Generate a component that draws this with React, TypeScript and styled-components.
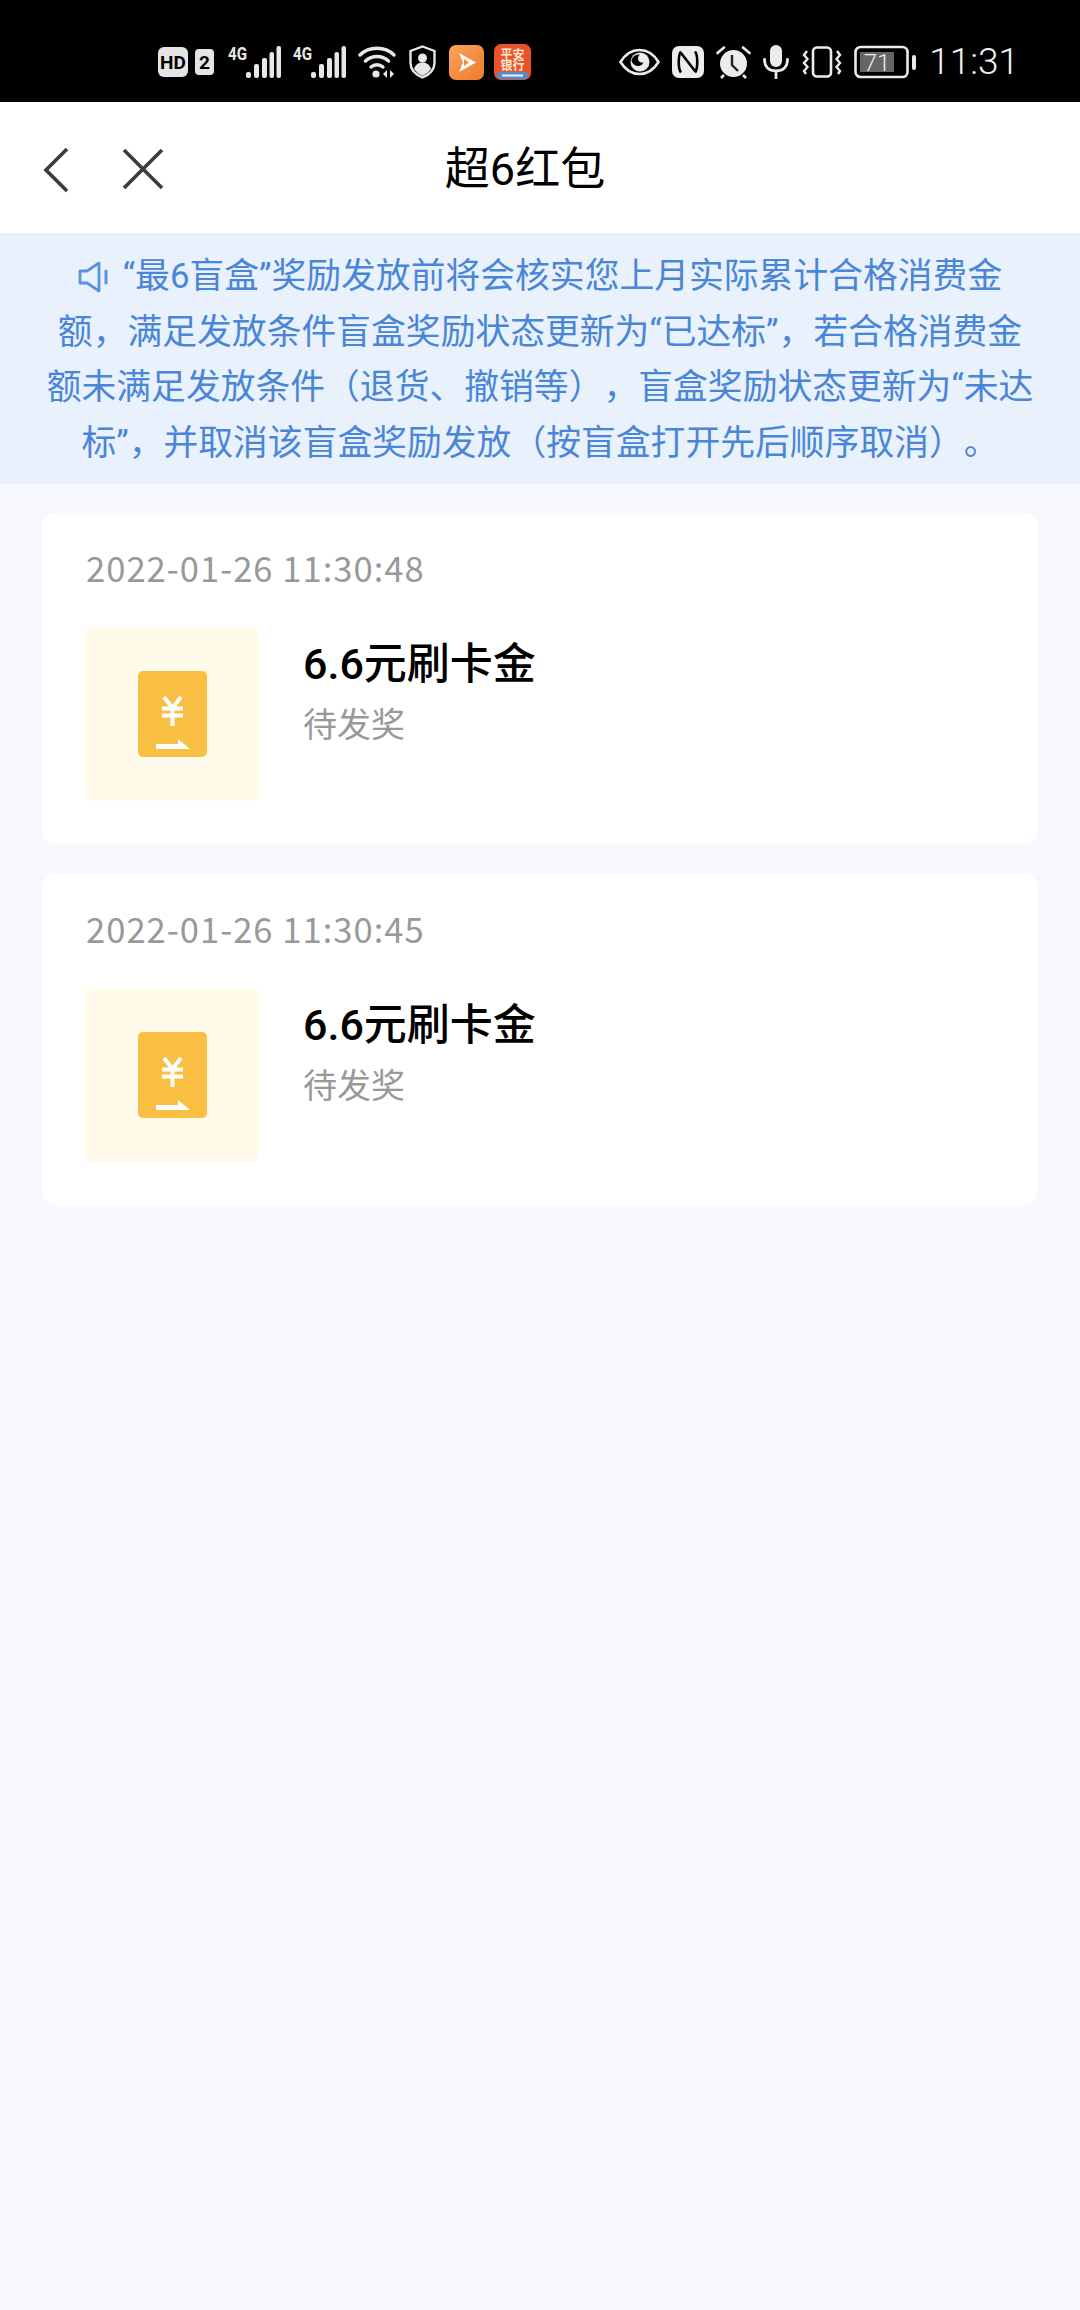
import React from 'react'
import styled, { createGlobalStyle } from 'styled-components'

const GlobalStyle = createGlobalStyle`
  html, body {
    margin: 0;
    padding: 0;
    background: #f7f9ff;
    font-family: Roboto, "Noto Sans CJK SC", sans-serif;
    text-spacing-trim: space-all;
  }
`

const Screen = styled.div`
  width: 1080px;
  min-height: 2310px;
  background: #f7f9ff;
`

const StatusBar = styled.div`
  display: flex;
  align-items: center;
  justify-content: space-between;
  height: 102px;
  padding: 22px 61px 0 158px;
  box-sizing: border-box;
  background: #000;
`

const StatusGroup = styled.div`
  display: flex;
  align-items: center;
`

const Glyph = styled.svg<{ $left?: number; $right?: number }>`
  display: block;
  flex: none;
  margin-left: ${({ $left }) => $left ?? 0}px;
  margin-right: ${({ $right }) => $right ?? 0}px;
`

const Clock = styled.span`
  margin-left: 12px;
  color: #f0f0f0;
  font-family: Roboto, sans-serif;
  font-size: 37px;
  font-weight: 300;
  line-height: 44px;
`

const NavBar = styled.div`
  position: relative;
  display: flex;
  align-items: center;
  justify-content: center;
  height: 132px;
  background: #fff;
  border-bottom: 1px solid #dfe5ee;
`

const NavButtons = styled.div`
  position: absolute;
  left: 41px;
  top: 45px;
  display: flex;
  gap: 40px;
`

const NavTitle = styled.h1`
  margin: 3px 30px 0 0;
  color: #000;
  font-size: 45px;
  font-weight: 400;
  line-height: 60px;
`

const Notice = styled.div`
  display: flex;
  flex-direction: column;
  align-items: center;
  height: 249px;
  padding-top: 14px;
  box-sizing: border-box;
  background: #e8f1fc;
  color: #4a86d8;
  font-size: 34.8px;
  line-height: 55.5px;
`

const NoticeLine = styled.div`
  display: flex;
  align-items: center;
  white-space: nowrap;
`

const CardList = styled.div`
  display: flex;
  flex-direction: column;
  gap: 30px;
  padding: 29px 43px 0;
`

const Card = styled.div`
  display: flex;
  flex-direction: column;
  height: 331px;
  padding: 32px 42px 0;
  box-sizing: border-box;
  background: #fff;
  border-radius: 12px;
`

const CardTime = styled.div`
  margin-left: 1px;
  color: #999;
  font-family: "Noto Sans CJK SC", sans-serif;
  font-size: 34.6px;
  letter-spacing: 1px;
  line-height: 44px;
`

const CardBody = styled.div`
  display: flex;
  gap: 44px;
  margin-top: 38px;
`

const Thumb = styled.div`
  display: flex;
  align-items: center;
  justify-content: center;
  width: 174px;
  height: 174px;
  background: #fffaea;
  border-radius: 6px;
`

const PrizeInfo = styled.div`
  display: flex;
  flex-direction: column;
  padding-top: 9px;
`

const PrizeName = styled.div`
  color: #000;
  font-size: 43px;
  font-weight: 500;
  line-height: 56px;
`

const PrizeState = styled.div`
  margin-top: 10px;
  color: #999;
  font-size: 34px;
  line-height: 46px;
`

const SignalIcon = ({ left }: { left: number }) => (
  <Glyph $left={left} width="54" height="40" viewBox="0 -3 54 40">
    <text x="0" y="15" fill="#e8e8e8" fontFamily="Roboto, sans-serif" fontWeight="700" fontSize="18" textLength="19" lengthAdjust="spacingAndGlyphs">4G</text>
    <rect x="18" y="27" width="5" height="6" rx="2" fill="#e8e8e8" />
    <rect x="26" y="19" width="5" height="14" rx="2" fill="#e8e8e8" />
    <rect x="34" y="13" width="5" height="20" rx="2" fill="#e8e8e8" />
    <rect x="41.500" y="7" width="4.500" height="26" rx="2" fill="#e8e8e8" />
    <rect x="48.500" y="1" width="4.500" height="32" rx="2" fill="#e8e8e8" />
  </Glyph>
)

const StatusIconsLeft = () => (
  <StatusGroup>
    <Glyph width="30" height="30" viewBox="0 0 30 30">
      <rect width="30" height="30" rx="6" fill="#e4e4e4" />
      <text x="15" y="22" textAnchor="middle" fill="#000" fontFamily="Roboto, sans-serif" fontWeight="700" fontSize="19">HD</text>
    </Glyph>
    <Glyph $left={7} width="19" height="26" viewBox="0 0 19 26">
      <rect width="19" height="26" rx="4" fill="#e4e4e4" />
      <text x="9.500" y="20" textAnchor="middle" fill="#000" fontFamily="Roboto, sans-serif" fontWeight="700" fontSize="19">2</text>
    </Glyph>
    <SignalIcon left={14} />
    <SignalIcon left={11} />
    <Glyph $left={11} width="38" height="34" viewBox="0 0 38 34">
      <g fill="none" stroke="#e8e8e8" strokeWidth="3.400" strokeLinecap="round">
        <path d="M2 10C11 1 27 1 36 10" />
        <path d="M7.500 16C14 10 24 10 30.500 16" />
        <path d="M13 22C16.500 19 21.500 19 25 22" />
      </g>
      <circle cx="18" cy="29" r="3.600" fill="#e8e8e8" />
      <path d="M29 25v8l-4-4zM32 25v8l4-4z" fill="#e8e8e8" />
    </Glyph>
    <Glyph $left={13} width="27" height="34" viewBox="0 0 27 34">
      <path d="M13.500 1.500 25.500 6v12c0 7-5 11.500-12 14.500C6.500 29.500 1.500 25 1.500 18V6z" fill="none" stroke="#e8e8e8" strokeWidth="2.400" />
      <circle cx="13.500" cy="13" r="4.500" fill="#e8e8e8" />
      <path d="M5 24c1.500-5 5-6.500 8.500-6.500S20.500 19 22 24c-2 3-5 5-8.500 7C10 29 7 27 5 24z" fill="#e8e8e8" />
    </Glyph>
    <Glyph $left={13} width="35" height="35" viewBox="0 0 35 35">
      <defs>
        <linearGradient id="videoApp" x1="0" y1="0" x2="1" y2="1">
          <stop offset="0" stopColor="#f9a45a" />
          <stop offset="1" stopColor="#ef7a2c" />
        </linearGradient>
      </defs>
      <rect width="35" height="35" rx="7" fill="url(#videoApp)" />
      <path d="M10 8 27 17.500 10 27l4-9.500z" fill="#fff" />
      <path d="M15 14l5 3.500-5 3.500z" fill="#f08a3c" />
    </Glyph>
    <Glyph $left={10} width="37" height="36" viewBox="0 0 37 36">
      <rect width="37" height="36" rx="7" fill="#e8532b" />
      <text textAnchor="middle" fill="#ffe9d6" fontFamily='"Noto Sans CJK SC", sans-serif' fontSize="12" fontWeight="700">
        <tspan x="18.500" y="15">平安</tspan>
        <tspan x="18.500" y="26">银行</tspan>
      </text>
      <rect x="3" y="28" width="31" height="7" rx="3.500" fill="#4d8fd0" />
      <rect x="8" y="30.500" width="21" height="2" fill="#e8f1fd" />
    </Glyph>
  </StatusGroup>
)

const StatusIconsRight = () => (
  <StatusGroup>
    <Glyph width="41" height="28" viewBox="0 0 41 28">
      <path d="M1.500 14C7 5 13 2 20.500 2S34 5 39.500 14C34 23 28 26 20.500 26S7 23 1.500 14z" fill="none" stroke="#ececec" strokeWidth="2.600" />
      <circle cx="21" cy="14" r="9.500" fill="#ececec" />
      <path d="M12.500 12C14 7.500 18 6 21 6.500c-2 1.500-2.500 4-1.500 6 1 1.800 3 2.500 5 2-1 2.500-3.500 4-6 3.500-3-.6-6-3-6-6z" fill="#000" />
    </Glyph>
    <Glyph $left={12} width="32" height="32" viewBox="0 0 32 32">
      <rect width="32" height="32" rx="7" fill="#ececec" />
      <path d="M9 5.500C6 9 6 23 9 26.500M9 7l14 18M23 5.500C26 9 26 23 23 26.500" fill="none" stroke="#000" strokeWidth="2.600" />
    </Glyph>
    <Glyph $left={12} width="35" height="34" viewBox="0 0 35 34">
      <circle cx="17.500" cy="18.500" r="13.500" fill="#ececec" />
      <path d="M16 10v10l6 6" fill="none" stroke="#222" strokeWidth="2.400" />
      <path d="M1.500 8 8 2.500M33.500 8 27 2.500" stroke="#ececec" strokeWidth="2.600" strokeLinecap="round" />
      <path d="M8 30l-3 3M27 30l3 3" stroke="#ececec" strokeWidth="2.600" />
    </Glyph>
    <Glyph $left={12} width="26" height="34" viewBox="0 0 26 34">
      <rect x="7" y="0" width="12" height="22" rx="6" fill="#ececec" />
      <path d="M1.500 14.500C1.500 22 6 26 13 26s11.500-4 11.500-11.500M13 26v8" fill="none" stroke="#ececec" strokeWidth="2.800" strokeLinecap="round" />
    </Glyph>
    <Glyph $left={13} width="40" height="32" viewBox="0 0 40 32">
      <rect x="11" y="1.500" width="18" height="29" rx="4" fill="none" stroke="#ececec" strokeWidth="2.600" />
      <path d="M5 5 2 9l3.500 4L2 17l3.500 4L2 25l2 3M35 5l3 4-3.500 4 3.500 4-3.500 4 3.500 4-2 3" fill="none" stroke="#ececec" strokeWidth="2.400" />
    </Glyph>
    <Glyph $left={12} width="63" height="34" viewBox="0 0 63 34">
      <rect x="1.500" y="2" width="52" height="30" rx="5" fill="none" stroke="#ececec" strokeWidth="2.600" />
      <rect x="6" y="7" width="34" height="20" fill="#666" />
      <text x="23" y="26" textAnchor="middle" fill="#ececec" fontFamily="Roboto, sans-serif" fontSize="24" fontWeight="300">71</text>
      <rect x="58" y="10" width="4" height="15" rx="2" fill="#ececec" />
    </Glyph>
    <Clock>11:31</Clock>
  </StatusGroup>
)

const BackIcon = () => (
  <Glyph width="30" height="46" viewBox="0 0 30 46">
    <path d="M26 2 5 23l21 21" fill="none" stroke="#3c3c3c" strokeWidth="3.600" />
  </Glyph>
)

const CloseIcon = () => (
  <Glyph $left={9} width="46" height="46" viewBox="0 0 46 46">
    <path d="M4 3l38 38M42 3 4 41" fill="none" stroke="#3c3c3c" strokeWidth="3.600" />
  </Glyph>
)

const SpeakerIcon = () => (
  <Glyph $right={14} width="31" height="32" viewBox="0 0 31 32">
    <path d="M2 10h7L21 2v28L9 22H2z" fill="none" stroke="#5a93e0" strokeWidth="2.800" strokeLinejoin="round" />
    <path d="M28 10v12" stroke="#5a93e0" strokeWidth="3" strokeLinecap="round" />
  </Glyph>
)

const CouponIcon = () => (
  <Glyph width="69" height="86" viewBox="0 0 69 86">
    <rect width="69" height="86" rx="5" fill="#f8bf43" />
    <path d="M26 26l8.500 11 8.500-11M24 37.500h21M24 44.500h21M34.500 37v18" fill="none" stroke="#fff" strokeWidth="4" />
    <path d="M18 73h22v-5l12 10H18z" fill="#fff" />
  </Glyph>
)

const records = ['2022-01-26 11:30:48', '2022-01-26 11:30:45']

const noticeLines = [
  '“最6盲盒”奖励发放前将会核实您上月实际累计合格消费金',
  '额，满足发放条件盲盒奖励状态更新为“已达标”，若合格消费金',
  '额未满足发放条件（退货、撤销等），盲盒奖励状态更新为“未达',
  '标”，并取消该盲盒奖励发放（按盲盒打开先后顺序取消）。',
]

const App: React.FC = () => (
  <Screen>
    <GlobalStyle />
    <StatusBar>
      <StatusIconsLeft />
      <StatusIconsRight />
    </StatusBar>
    <NavBar>
      <NavButtons>
        <BackIcon />
        <CloseIcon />
      </NavButtons>
      <NavTitle>超6红包</NavTitle>
    </NavBar>
    <Notice>
      {noticeLines.map((line, i) => (
        <NoticeLine key={line}>
          {i === 0 && <SpeakerIcon />}
          {line}
        </NoticeLine>
      ))}
    </Notice>
    <CardList>
      {records.map((time) => (
        <Card key={time}>
          <CardTime>{time}</CardTime>
          <CardBody>
            <Thumb>
              <CouponIcon />
            </Thumb>
            <PrizeInfo>
              <PrizeName>6.6元刷卡金</PrizeName>
              <PrizeState>待发奖</PrizeState>
            </PrizeInfo>
          </CardBody>
        </Card>
      ))}
    </CardList>
  </Screen>
)

export default App
